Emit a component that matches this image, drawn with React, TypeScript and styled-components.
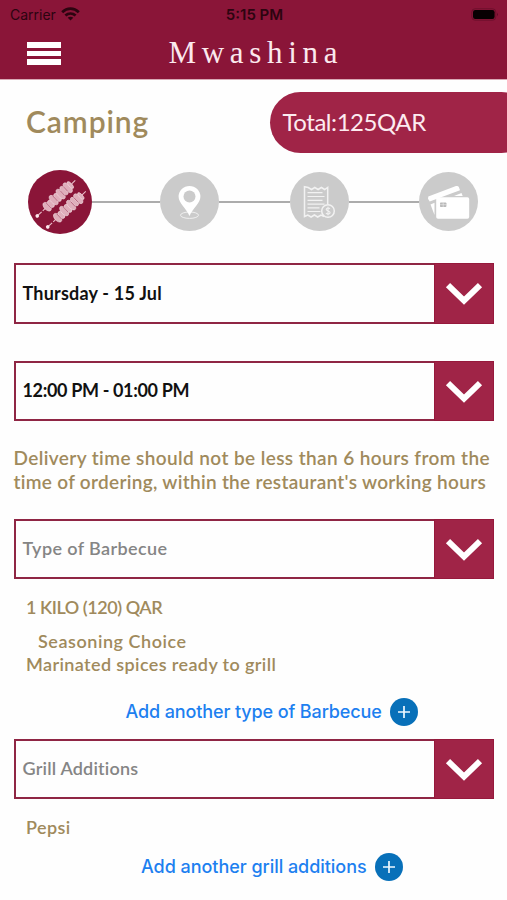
import React from 'react';
import styled, { createGlobalStyle } from 'styled-components';

const GlobalStyle = createGlobalStyle`
  * { box-sizing: border-box; }
  body { margin: 0; background: #fff; }
`;

const maroon = '#8a1538';
const crimson = '#a02447';
const gold = '#a08a5c';

const Screen = styled.main`
  width: 507px;
  height: 900px;
  overflow: hidden;
  background: #fefefe;
  font-family: Lato, "Open Sans", sans-serif;
  white-space: nowrap;
`;

const Header = styled.header`
  height: 79px;
  background: ${maroon};
  box-shadow: 0 1px 0 #d9a9b5;
`;

const StatusBar = styled.div`
  height: 28px;
  padding: 0 8px 0 10px;
  display: grid;
  grid-template-columns: 1fr auto 1fr;
  align-items: center;
  color: #2c0410;
  font-family: Inter, sans-serif;
`;

const Carrier = styled.div`
  display: flex;
  align-items: center;
  gap: 5px;
  font-size: 14px;
`;

const Clock = styled.div`
  font-size: 15px;
  font-weight: 600;
`;

const Battery = styled.div`
  justify-self: end;
  display: flex;
`;

const NavBar = styled.div`
  height: 51px;
  display: grid;
  grid-template-columns: 168.5px 1fr;
  align-items: center;
`;

const MenuButton = styled.button`
  width: 34px;
  height: 23px;
  margin: 0 0 0 27px;
  padding: 0;
  border: 0;
  background: none;
  display: flex;
  flex-direction: column;
  justify-content: space-between;
`;

const MenuBar = styled.span`
  height: 5.6px;
  background: #fff;
`;

const Brand = styled.h1`
  margin: 0;
  padding-bottom: 1px;
  color: #fbe9ee;
  font: 400 31px/40px "Liberation Serif", serif;
  letter-spacing: 5.7px;
`;

const TitleRow = styled.div`
  height: 61px;
  margin-top: 12.5px;
  padding-left: 26px;
  display: flex;
  justify-content: space-between;
  align-items: center;
`;

const Title = styled.h2`
  margin: 0;
  padding-bottom: 3px;
  color: ${gold};
  font-size: 30px;
  font-weight: 600;
  letter-spacing: 0.9px;
`;

const Total = styled.div`
  width: 262px;
  height: 61px;
  margin-right: -25px;
  padding: 0 0 2px 12.5px;
  flex: none;
  display: flex;
  align-items: center;
  border-radius: 31px;
  background: ${crimson};
  color: #fdebf0;
  font-size: 24px;
  letter-spacing: -0.45px;
`;

const Steps = styled.div`
  height: 64px;
  margin: 17px 0 0 28px;
  display: flex;
  align-items: center;
`;

const Step = styled.div<{ $active?: boolean }>`
  width: ${p => (p.$active ? 64 : 59)}px;
  height: ${p => (p.$active ? 64 : 59)}px;
  flex: none;
  border-radius: 50%;
  background: ${p => (p.$active ? maroon : '#cbcbcb')};
  display: grid;
  place-items: center;
`;

const Connector = styled.div<{ $length: number }>`
  width: ${p => p.$length}px;
  height: 2px;
  background: #acacac;
`;

const Select = styled.div<{ $top: number }>`
  width: 480.5px;
  height: 60.5px;
  margin: ${p => p.$top}px 0 0 13.5px;
  display: flex;
  border: 2px solid #8f2644;
`;

const Value = styled.div<{ $placeholder?: boolean; $track: number }>`
  flex: 1;
  padding: 0 0 1px 7px;
  display: flex;
  align-items: center;
  color: ${p => (p.$placeholder ? '#858585' : '#111')};
  font-size: 18px;
  font-weight: ${p => (p.$placeholder ? 600 : 700)};
  letter-spacing: ${p => p.$track}px;
`;

const Arrow = styled.div`
  width: 60.5px;
  margin: -2px;
  padding-top: 2px;
  display: grid;
  place-items: center;
  background: ${crimson};
  border: 1px solid #96193c;
`;

const Notice = styled.p`
  margin: 25px 0 0 13.5px;
  color: ${gold};
  font-size: 19px;
  font-weight: 600;
  line-height: 24px;
`;

const NoticeLine = styled.span<{ $track: number }>`
  display: block;
  letter-spacing: ${p => p.$track}px;
`;

const Detail = styled.div<{ $track: number; $top?: number; $indent?: boolean }>`
  height: 24px;
  margin: ${p => p.$top ?? 0}px 0 0 ${p => (p.$indent ? 38 : 26)}px;
  color: ${gold};
  font-size: 18px;
  font-weight: 600;
  line-height: 24px;
  letter-spacing: ${p => p.$track}px;
`;

const AddRow = styled.div<{ $top: number; $left: number }>`
  height: 28px;
  margin: ${p => p.$top}px 0 0 ${p => p.$left}px;
  display: flex;
  align-items: center;
  gap: 8px;
  color: #1d80f0;
  font: 500 18px/28px Inter, sans-serif;
`;

const AddLabel = styled.span<{ $track: number }>`
  letter-spacing: ${p => p.$track}px;
`;

const AddBadge = styled.span`
  width: 28px;
  height: 28px;
  display: grid;
  place-items: center;
  border-radius: 50%;
  background: #0870b9;
`;

const WifiIcon = () => (
  <svg width="19" height="14" viewBox="0 0 19 14" fill="none" stroke="#2c0410" strokeWidth="2.7">
    <path d="M1.2 5.2C6 .4 13 .4 17.8 5.2" />
    <path d="M4.4 8.6c3-2.8 7.2-2.8 10.2 0" />
    <path d="M9.5 13.6 6.7 10.8c1.6-1.3 4-1.3 5.6 0Z" fill="#2c0410" stroke="none" />
  </svg>
);

const BatteryIcon = () => (
  <svg width="28" height="13" viewBox="0 0 28 13">
    <rect x=".8" y=".8" width="24" height="11.4" rx="3.2" fill="none" stroke="#6d0f2c" />
    <rect x="2" y="2" width="21.6" height="9" rx="2.2" fill="#080002" />
    <path d="M26 4.7q1.5 1.8 0 3.6Z" fill="#4b081d" />
  </svg>
);

const Skewer = () => (
  <g>
    <path d="M-27 0H-16M20 0H25" stroke="#e9bfca" strokeWidth="1.1" strokeDasharray="6 1.5" />
    <circle cx="-27" cy="0" r="1.8" fill="#fbe8ed" />
    <g fill="#dfaebb" stroke="#f3dbe1" strokeWidth=".6">
      <ellipse cx="-13.5" cy="0" rx="3" ry="5.2" />
      <ellipse cx="-8.800" cy=".5" rx="2.600" ry="4.200" />
      <ellipse cx="-4.200" cy="-.4" rx="3" ry="5.800" />
      <ellipse cx=".5" cy=".3" rx="2.600" ry="4.800" />
      <ellipse cx="5" cy="0" rx="3" ry="6" />
      <ellipse cx="9.800" cy="-.3" rx="2.700" ry="5.200" />
      <ellipse cx="14.500" cy=".2" rx="3.100" ry="6" />
      <ellipse cx="18.300" cy="0" rx="1.700" ry="4.300" />
    </g>
    <path d="M-11.500-3.500v7M-2-4v7M7-3v7M12-4v7" stroke="#b05a76" strokeWidth=".8" />
  </g>
);

const SkewersIcon = () => (
  <svg width="64" height="64" viewBox="0 0 64 64">
    <g transform="translate(29 27.500) rotate(-43)"><Skewer /></g>
    <g transform="translate(39.500 38.500) rotate(-43)"><Skewer /></g>
  </svg>
);

const PinIcon = () => (
  <svg width="59" height="59" viewBox="0 0 59 59">
    <ellipse cx="29.5" cy="43.2" rx="9" ry="3.2" fill="none" stroke="#f0f0f0" strokeWidth="1" />
    <path d="M29.5 44C26 36 18.6 31 18.6 24.8a10.900 10.900 0 0 1 21.800 0C40.400 31 33 36 29.500 44Z" fill="#fff" />
    <circle cx="29.500" cy="24.500" r="6" fill="#cbcbcb" />
  </svg>
);

const ReceiptIcon = () => (
  <svg width="59" height="59" viewBox="0 0 59 59" fill="none" stroke="#f2f2f2" strokeWidth="1.5">
    <path d="M37.700 32V15.500l-3 2-3.300-2-3.300 2-3.300-2-3.300 2-3.300-2-3.700-.8V44.500l3.300-1.500 3.300 2 3.300-2 3.300 2 3.300-2 3 1.500" />
    <path d="M17.500 20.700h15M17.500 24.500h17M17.500 28.300h15M17.500 32.100h17M17.500 35.900h12M17.500 39.500h13" strokeWidth="1.2" />
    <circle cx="38" cy="39" r="6.300" fill="#cbcbcb" />
    <path d="M40 36.700c-1-1.200-3.800-1-3.800.7s3.900 1.300 3.900 3.100-3 1.900-4.200.7M38 34.800v8.500" strokeWidth="1.100" />
  </svg>
);

const CardsIcon = () => (
  <svg width="59" height="59" viewBox="0 0 59 59">
    <path d="M9.300 24.500 37 14.100q2-.7 2.800 1L41 18.200 10.700 29.500 9 26.800Z" fill="#fff" />
    <path d="m35 24 7.500-3 1.200 3Z M11.500 32.500l4-1.700V43Z" fill="#fff" />
    <rect x="17.200" y="25.300" width="33" height="21.500" rx="1.800" fill="#fff" />
    <rect x="21" y="30.500" width="6.400" height="4.500" rx=".8" fill="#b9b9b9" />
    <path d="M24.200 30.500V35M21 32.700h6.400" stroke="#ededed" strokeWidth=".6" />
  </svg>
);

const ChevronIcon = () => (
  <svg width="38" height="26" viewBox="0 0 38 26" fill="none" stroke="#fff" strokeWidth="6">
    <path d="M3 4.200 19 19.600 35 4.200" />
  </svg>
);

const PlusIcon = () => (
  <svg width="12" height="12" viewBox="0 0 12 12" stroke="#eef8ff" strokeWidth="1.700">
    <path d="M6 0v12M0 6h12" />
  </svg>
);

type FieldProps = { text: string; top: number; track: number; placeholder?: boolean };

const Field = ({ text, top, track, placeholder }: FieldProps) => (
  <Select $top={top}>
    <Value $track={track} $placeholder={placeholder}>{text}</Value>
    <Arrow><ChevronIcon /></Arrow>
  </Select>
);

type AddProps = { text: string; top: number; left: number; track: number };

const AddLink = ({ text, top, left, track }: AddProps) => (
  <AddRow $top={top} $left={left}>
    <AddLabel $track={track}>{text}</AddLabel>
    <AddBadge><PlusIcon /></AddBadge>
  </AddRow>
);

export default function App() {
  return (
    <Screen>
      <GlobalStyle />
      <Header>
        <StatusBar>
          <Carrier>Carrier <WifiIcon /></Carrier>
          <Clock>5:15 PM</Clock>
          <Battery><BatteryIcon /></Battery>
        </StatusBar>
        <NavBar>
          <MenuButton aria-label="Menu"><MenuBar /><MenuBar /><MenuBar /></MenuButton>
          <Brand>Mwashina</Brand>
        </NavBar>
      </Header>

      <TitleRow>
        <Title>Camping</Title>
        <Total>Total:125QAR</Total>
      </TitleRow>

      <Steps>
        <Step $active><SkewersIcon /></Step>
        <Connector $length={68} />
        <Step><PinIcon /></Step>
        <Connector $length={71} />
        <Step><ReceiptIcon /></Step>
        <Connector $length={70} />
        <Step><CardsIcon /></Step>
      </Steps>

      <Field top={29.5} track={0.2} text="Thursday - 15 Jul" />
      <Field top={37} track={-0.35} text="12:00 PM - 01:00 PM" />

      <Notice>
        <NoticeLine $track={0.4}>Delivery time should not be less than 6 hours from the</NoticeLine>
        <NoticeLine $track={0.3}>time of ordering, within the restaurant's working hours</NoticeLine>
      </Notice>

      <Field top={24.5} track={0.4} placeholder text="Type of Barbecue" />
      <Detail $top={15.5} $track={-0.45}>1 KILO (120) QAR</Detail>
      <Detail $top={10} $track={0.55} $indent>Seasoning Choice</Detail>
      <Detail $top={-1} $track={0.38}>Marinated spices ready to grill</Detail>
      <AddLink top={22} left={125.5} track={-0.12} text="Add another type of Barbecue" />

      <Field top={13} track={0.2} placeholder text="Grill Additions" />
      <Detail $top={15.5} $track={0.4}>Pepsi</Detail>
      <AddLink top={14} left={141} track={-0.04} text="Add another grill additions" />
    </Screen>
  );
}
